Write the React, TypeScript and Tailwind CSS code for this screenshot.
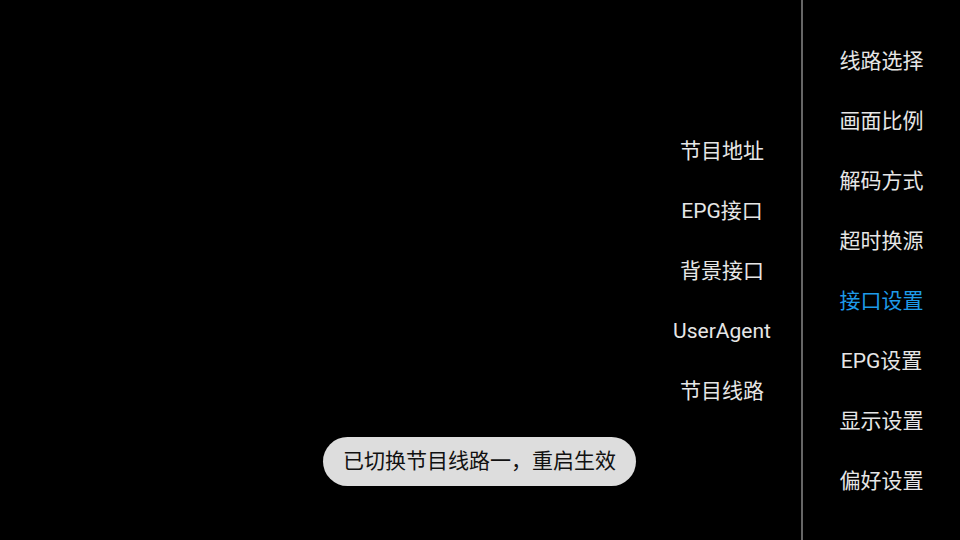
import React from "react";

const right = ["线路选择", "画面比例", "解码方式", "超时换源", "接口设置", "EPG设置", "显示设置", "偏好设置"];
const middle = ["节目地址", "EPG接口", "背景接口", "UserAgent", "节目线路"];

export default function App() {
  return (
    <div
      className="relative w-[960px] h-[540px] bg-black flex overflow-hidden"
      style={{ fontFamily: 'Roboto, "Noto Sans CJK SC", sans-serif' }}
    >
      <div className="flex-1" />
      <div className="w-[160px] flex flex-col pt-[122px] pl-[2px]">
        {middle.map((t) => (
          <div key={t} className="h-[60px] flex items-center justify-center text-[21px] text-[#e6e6e6]">
            {t}
          </div>
        ))}
      </div>
      <div className="w-[2px] bg-[#666666]" />
      <div className="w-[157px] flex flex-col pt-[32px]">
        {right.map((t) => (
          <div
            key={t}
            className={
              "h-[60px] flex items-center justify-center text-[21px] " +
              (t === "接口设置" ? "text-[#1e9be9]" : "text-[#e6e6e6]")
            }
          >
            {t}
          </div>
        ))}
      </div>
      <div className="absolute left-[323px] top-[437px] w-[313px] h-[49px] pt-[1px] rounded-full bg-[#dddddd] flex items-center justify-center text-[21px] text-[#111111] whitespace-nowrap">
        已切换节目线路一，重启生效
      </div>
    </div>
  );
}
